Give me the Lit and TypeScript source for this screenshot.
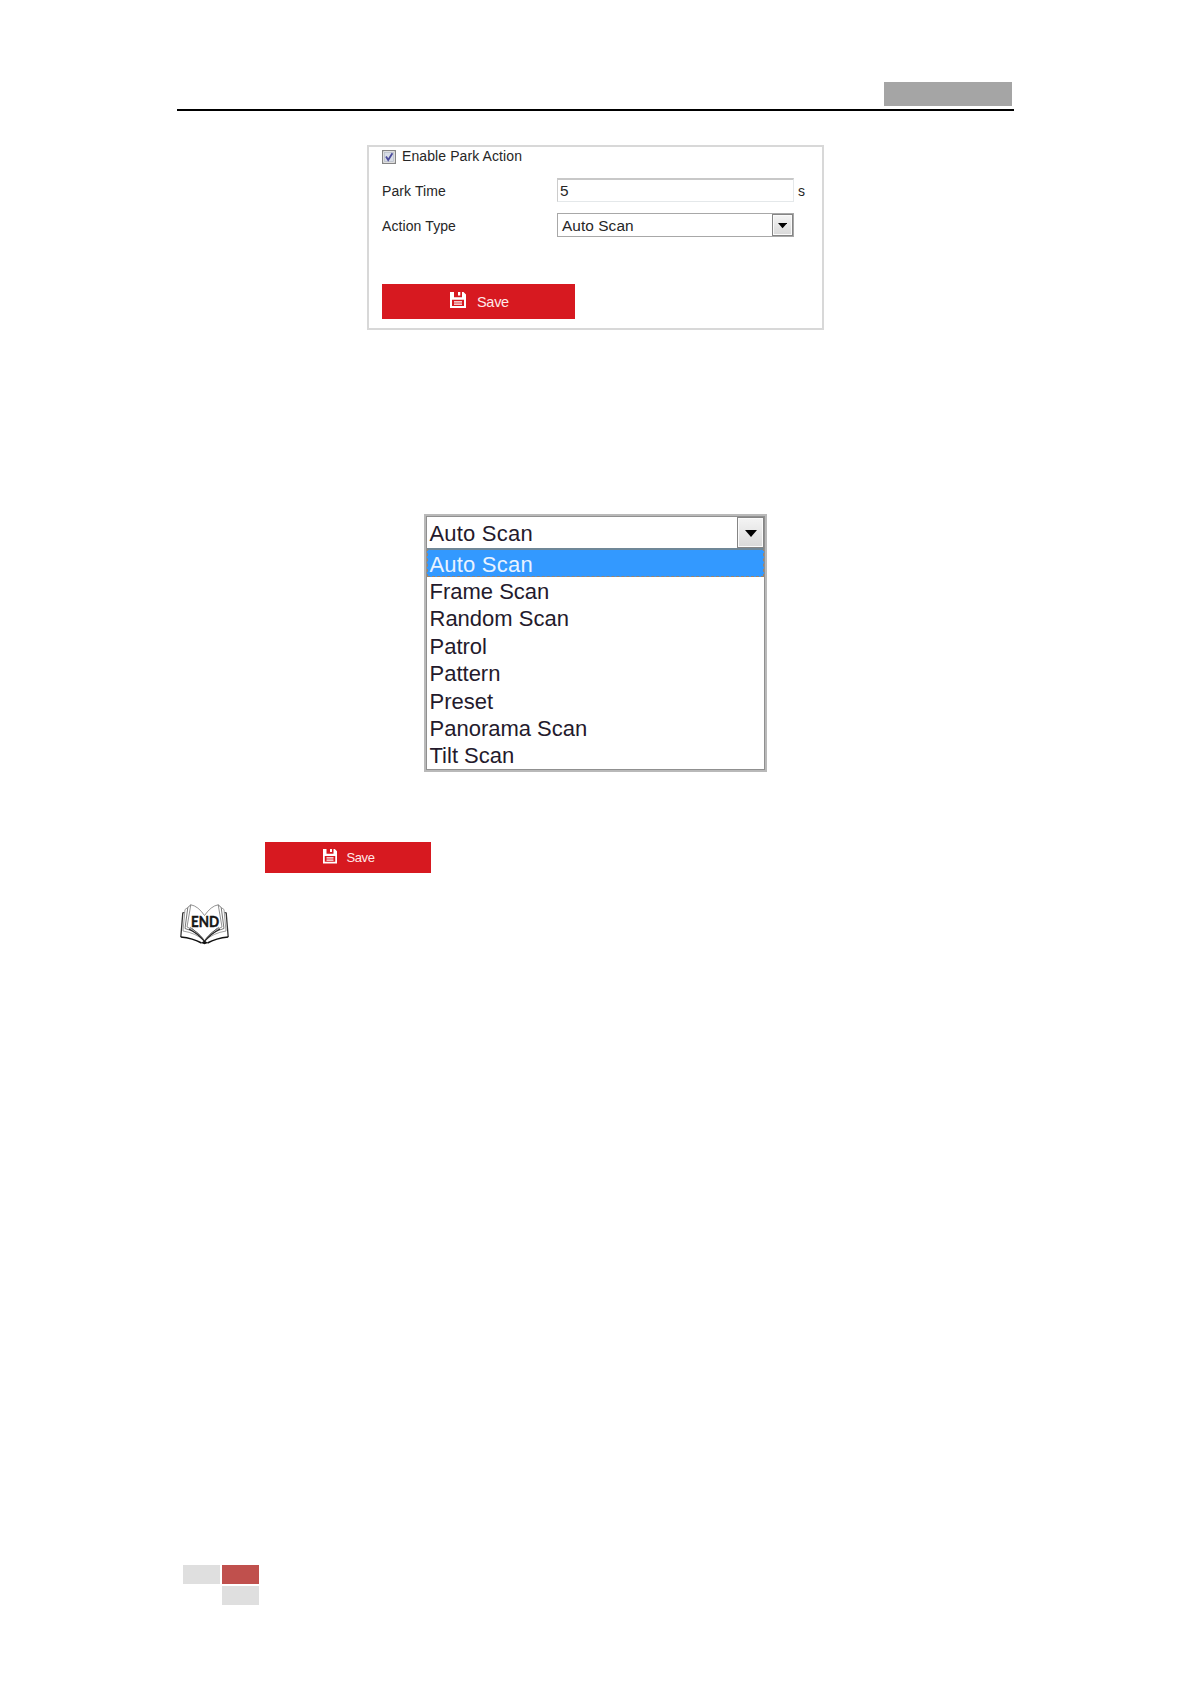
import { LitElement, html, css, svg } from "lit";
import { customElement, property } from "lit/decorators.js";

const ACTIONS = ["Auto Scan", "Frame Scan", "Random Scan", "Patrol", "Pattern", "Preset", "Panorama Scan", "Tilt Scan"];

@customElement("save-button")
class SaveButton extends LitElement {
  @property({ type: Boolean, reflect: true }) compact = false;
  static styles = css`
    :host { display: block; width: 193px; height: 35px; }
    :host([compact]) { width: 166px; height: 31px; }
    .btn { box-sizing: border-box; width: 100%; height: 100%; border: 0; margin: 0; padding: 0 0 0 68px; background: #d71920; color: #fff; display: flex; align-items: flex-start; font: 14.5px/18px "Liberation Sans", Arial, sans-serif; letter-spacing: -0.3px; }
    .icon { width: 16px; height: 16px; margin-top: 8px; display: block; }
    .label { margin: 9px 0 0 11px; color: #ffe9e9; }
    :host([compact]) .btn { padding-left: 58px; font-size: 13px; line-height: 16px; letter-spacing: -0.4px; }
    :host([compact]) .icon { width: 14px; height: 14.5px; margin-top: 7px; }
    :host([compact]) .label { margin: 8px 0 0 9.5px; }
  `;
  render() {
    return html`<button class="btn">
      <svg class="icon" viewBox="0 0 16 16" preserveAspectRatio="none">
        <path fill="#fff" fill-rule="evenodd" d="M0 0H13.5L16 2.5V16H0ZM4 0V5.2H12V0H10.3V3.4H8V0ZM2 7.8V14H14V7.8Z" />
        <path stroke="#fff" stroke-width="1.3" d="M4 9.8H12M4 12.2H12" />
      </svg><span class="label">Save</span>
    </button>`;
  }
}

@customElement("drop-arrow")
class DropArrow extends LitElement {
  static styles = css`
    :host { display: flex; box-sizing: border-box; align-items: center; justify-content: center; border: 1.5px solid #858585; background: linear-gradient(#f4f4f4, #d9d9d9); box-shadow: inset 0 0 0 1px #fafafa; }
    .tri { width: 48%; max-width: 12px; display: block; margin-top: 2px; }
  `;
  render() {
    return html`<svg class="tri" viewBox="0 0 12 7"><path d="M0 0H12L6 7Z" fill="#000" /></svg>`;
  }
}

@customElement("end-book")
class EndBook extends LitElement {
  static styles = css`
    :host { display: block; }
    .book { display: block; }
    .word { font: bold 15px Lato, "Open Sans", sans-serif; fill: #151515; stroke: #151515; stroke-width: 0.45px; }
  `;
  pages() {
    return svg`
      <path d="M24.5 11.5Q18 2 10.8.8L7 23Q20 28 24.5 37" stroke="#777" stroke-width=".8"/>
      <path d="M10.8.8L7.8 3.5 5 24.5Q18 28 24.5 37" stroke="#555" stroke-width=".8"/>
      <path d="M7.8 3.5L5 5.5 3 27Q16 29 24.5 37" stroke="#888" stroke-width=".8"/>
      <path d="M10 23Q16 27 24.5 36.5" stroke="#555" stroke-width=".9"/>
      <path d="M9 25Q17 29 24.5 37.5" stroke="#222" stroke-width="1.1"/>
      <path d="M4.3 8.5L2.8 9 .8 33" stroke="#333" stroke-width="1.3"/>
      <path d="M.8 33Q13 34.2 21.5 39" stroke="#111" stroke-width="1.5"/>`;
  }
  render() {
    return html`<svg class="book" width="49" height="41" viewBox="0 0 49 41" fill="none">
      <g>${this.pages()}</g>
      <g transform="matrix(-1 0 0 1 49 0)">${this.pages()}</g>
      <path d="M21 39L24.5 36.5 28 39 24.5 40.3Z" fill="#111"/>
      <rect x="10.5" y="12" width="28" height="11.5" fill="#fff"/>
      <text class="word" x="11" y="22.8" textLength="28" lengthAdjust="spacingAndGlyphs">END</text>
    </svg>`;
  }
}

@customElement("app-root")
class AppRoot extends LitElement {
  static styles = css`
    :host { display: block; background: #fff; font-family: "Liberation Sans", Arial, sans-serif; color: #262626; }
    .page { box-sizing: border-box; width: 1191px; height: 1684px; padding: 82px 177px 79px; display: flex; flex-direction: column; overflow: hidden; }
    .head { width: 837px; height: 29px; box-sizing: border-box; border-bottom: 2px solid #000; display: flex; justify-content: flex-end; padding-right: 2px; }
    .tag { width: 128px; height: 24px; background: #a5a5a5; }
    .card { box-sizing: border-box; width: 457px; height: 185px; margin: 34px 0 0 190px; border: 2px solid #d8d8d8; padding: 0 0 0 13px; font-size: 14px; }
    .row { display: flex; height: 35px; align-items: flex-start; line-height: 20px; }
    .row.first { height: 31px; }
    .check { width: 14px; height: 14px; margin: 3px 6px 0 0; display: block; }
    .name { width: 175px; letter-spacing: 0.1px; padding-top: 3px; }
    .first .name { padding-top: 0; line-height: 18px; }
    .field { box-sizing: border-box; width: 237px; height: 24px; border: 1px solid #e4e8ea; border-top: 2px solid #c8c8c8; border-left-color: #ccc; padding-left: 2px; line-height: 21px; font-size: 15.4px; }
    .unit { margin-left: 4px; padding-top: 3px; }
    .select { box-sizing: border-box; width: 237px; height: 24px; border: 1px solid #a8a8a8; display: flex; justify-content: space-between; padding-left: 4px; line-height: 24px; font-size: 15.4px; letter-spacing: 0.07px; }
    .select drop-arrow { width: 21px; height: 22px; }
    .card save-button { margin-top: 0.5px; }
    .list { box-sizing: border-box; width: 343px; height: 258px; margin: 184px 0 0 247px; border: 2px solid #b9b9b9; outline: 1px solid #909090; outline-offset: -3px; padding: 1px; font-size: 22px; color: #241a2c; }
    .current { height: 31px; display: flex; justify-content: space-between; line-height: 34px; padding-left: 2.5px; letter-spacing: 0.2px; }
    .current drop-arrow { width: 27px; height: 31px; }
    .option { height: 27.4px; line-height: 29.4px; padding-left: 2.5px; }
    .option.on { box-sizing: border-box; height: 29px; line-height: 29px; background: #3399ff; color: #e9f3ff; border: 1px dashed #a08468; border-top: 2px solid #6f8797; padding-left: 1.5px; letter-spacing: 0.2px; }
    .saveline { margin: 70px 0 0 88px; }
    end-book { margin: 31px 0 0 3px; }
    .foot { margin: auto 0 0 6px; display: grid; grid-template: 19px 19px / 37px 37px; gap: 2px; }
    .g { background: #dfdfdf; }
    .r { background: #c0504d; }
    .g.low { grid-column: 2; }
  `;
  render() {
    return html`<main class="page">
      <header class="head"><div class="tag"></div></header>
      <section class="card">
        <div class="row first">
          <svg class="check" viewBox="0 0 14 14"><rect x=".6" y=".6" width="12.8" height="12.8" fill="#f5f5f5" stroke="#858585" stroke-width="1.2"/><rect x="2.5" y="2.5" width="9" height="9" fill="#d7dce6" stroke="#b8bdc8" stroke-width=".8"/><path d="M4 6.5L6.2 10 10.4 3.2" fill="none" stroke="#4b4b9c" stroke-width="1.8"/></svg>
          <span class="name">Enable Park Action</span>
        </div>
        <div class="row"><span class="name">Park Time</span><div class="field">5</div><span class="unit">s</span></div>
        <div class="row"><span class="name">Action Type</span><div class="select"><span>Auto Scan</span><drop-arrow></drop-arrow></div></div>
        <div class="row"></div>
        <save-button></save-button>
      </section>
      <section class="list">
        <div class="current"><span>Auto Scan</span><drop-arrow></drop-arrow></div>
        ${ACTIONS.map((a, i) => html`<div class="option ${i === 0 ? "on" : ""}">${a}</div>`)}
      </section>
      <save-button class="saveline" compact></save-button>
      <end-book></end-book>
      <footer class="foot"><div class="g"></div><div class="r"></div><div class="g low"></div></footer>
    </main>`;
  }
}
